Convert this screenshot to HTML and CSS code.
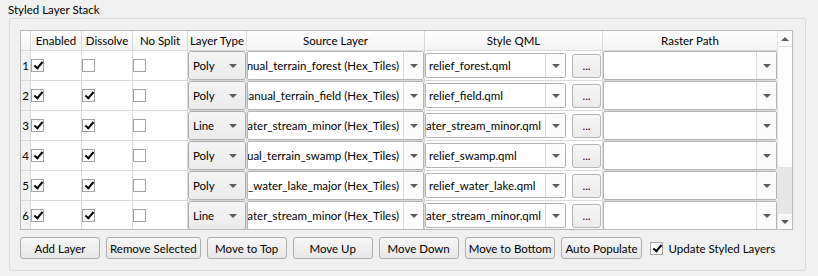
FILE: index.html
```html
<!DOCTYPE html>
<html lang="en">
<head>
    <meta charset="UTF-8">
    <title>Styled Layer Stack</title>
    <link rel="stylesheet" href="styles.css">
</head>
<body>
    <div class="title">Styled Layer Stack</div>
    <div class="group">
        <div class="table">
            <div class="viewport">
                <div class="grid">
                    <div class="hcell corner"></div>
                    <div class="hcell">Enabled</div>
                    <div class="hcell">Dissolve</div>
                    <div class="hcell">No Split</div>
                    <div class="hcell">Layer Type</div>
                    <div class="hcell">Source Layer</div>
                    <div class="hcell">Style QML</div>
                    <div class="hcell">Raster Path</div>

                    <!-- row 1 -->
                    <div class="rownum">1</div>
                    <div class="cell"><span class="check on"></span></div>
                    <div class="cell"><span class="check"></span></div>
                    <div class="cell"><span class="check"></span></div>
                    <div class="cell"><div class="combo"><span>Poly</span><i class="arrow"></i></div></div>
                    <div class="cell"><div class="edit-combo"><div class="text"><span>manual_terrain_forest (Hex_Tiles)</span></div><div class="drop"><i class="arrow"></i></div></div></div>
                    <div class="cell style-cell"><div class="edit-combo small"><div class="text"><span>relief_forest.qml</span></div><div class="drop"><i class="arrow"></i></div></div><button class="browse">...</button></div>
                    <div class="cell"><div class="edit-combo"><div class="text"><span></span></div><div class="drop"><i class="arrow"></i></div></div></div>

                    <!-- row 2 -->
                    <div class="rownum">2</div>
                    <div class="cell"><span class="check on"></span></div>
                    <div class="cell"><span class="check on"></span></div>
                    <div class="cell"><span class="check"></span></div>
                    <div class="cell"><div class="combo"><span>Poly</span><i class="arrow"></i></div></div>
                    <div class="cell"><div class="edit-combo"><div class="text"><span>manual_terrain_field (Hex_Tiles)</span></div><div class="drop"><i class="arrow"></i></div></div></div>
                    <div class="cell style-cell"><div class="edit-combo small"><div class="text"><span>relief_field.qml</span></div><div class="drop"><i class="arrow"></i></div></div><button class="browse">...</button></div>
                    <div class="cell"><div class="edit-combo"><div class="text"><span></span></div><div class="drop"><i class="arrow"></i></div></div></div>

                    <!-- row 3 -->
                    <div class="rownum">3</div>
                    <div class="cell"><span class="check on"></span></div>
                    <div class="cell"><span class="check on"></span></div>
                    <div class="cell"><span class="check"></span></div>
                    <div class="cell"><div class="combo"><span>Line</span><i class="arrow"></i></div></div>
                    <div class="cell"><div class="edit-combo"><div class="text"><span>natural_water_stream_minor (Hex_Tiles)</span></div><div class="drop"><i class="arrow"></i></div></div></div>
                    <div class="cell style-cell"><div class="edit-combo small"><div class="text"><span>relief_water_stream_minor.qml</span></div><div class="drop"><i class="arrow"></i></div></div><button class="browse">...</button></div>
                    <div class="cell"><div class="edit-combo"><div class="text"><span></span></div><div class="drop"><i class="arrow"></i></div></div></div>

                    <!-- row 4 -->
                    <div class="rownum">4</div>
                    <div class="cell"><span class="check on"></span></div>
                    <div class="cell"><span class="check on"></span></div>
                    <div class="cell"><span class="check"></span></div>
                    <div class="cell"><div class="combo"><span>Poly</span><i class="arrow"></i></div></div>
                    <div class="cell"><div class="edit-combo"><div class="text"><span>manual_terrain_swamp (Hex_Tiles)</span></div><div class="drop"><i class="arrow"></i></div></div></div>
                    <div class="cell style-cell"><div class="edit-combo small"><div class="text"><span>relief_swamp.qml</span></div><div class="drop"><i class="arrow"></i></div></div><button class="browse">...</button></div>
                    <div class="cell"><div class="edit-combo"><div class="text"><span></span></div><div class="drop"><i class="arrow"></i></div></div></div>

                    <!-- row 5 -->
                    <div class="rownum">5</div>
                    <div class="cell"><span class="check on"></span></div>
                    <div class="cell"><span class="check on"></span></div>
                    <div class="cell"><span class="check"></span></div>
                    <div class="cell"><div class="combo"><span>Poly</span><i class="arrow"></i></div></div>
                    <div class="cell"><div class="edit-combo"><div class="text"><span>natural_water_lake_major (Hex_Tiles)</span></div><div class="drop"><i class="arrow"></i></div></div></div>
                    <div class="cell style-cell"><div class="edit-combo small"><div class="text"><span>relief_water_lake.qml</span></div><div class="drop"><i class="arrow"></i></div></div><button class="browse">...</button></div>
                    <div class="cell"><div class="edit-combo"><div class="text"><span></span></div><div class="drop"><i class="arrow"></i></div></div></div>

                    <!-- row 6 -->
                    <div class="rownum">6</div>
                    <div class="cell"><span class="check on"></span></div>
                    <div class="cell"><span class="check on"></span></div>
                    <div class="cell"><span class="check"></span></div>
                    <div class="cell"><div class="combo"><span>Line</span><i class="arrow"></i></div></div>
                    <div class="cell"><div class="edit-combo"><div class="text"><span>natural_water_stream_minor (Hex_Tiles)</span></div><div class="drop"><i class="arrow"></i></div></div></div>
                    <div class="cell style-cell"><div class="edit-combo small"><div class="text"><span>relief_water_stream_minor.qml</span></div><div class="drop"><i class="arrow"></i></div></div><button class="browse">...</button></div>
                    <div class="cell"><div class="edit-combo"><div class="text"><span></span></div><div class="drop"><i class="arrow"></i></div></div></div>
                </div>
            </div>
            <div class="vscroll">
                <div class="sb-btn"><i class="arrow up"></i></div>
                <div class="sb-thumb"></div>
                <div class="sb-track"></div>
                <div class="sb-btn"><i class="arrow"></i></div>
            </div>
        </div>

        <div class="actions">
            <button class="btn">Add Layer</button>
            <button class="btn">Remove Selected</button>
            <button class="btn">Move to Top</button>
            <button class="btn">Move Up</button>
            <button class="btn">Move Down</button>
            <button class="btn">Move to Bottom</button>
            <button class="btn">Auto Populate</button>
            <label class="option"><span class="check on"></span>Update Styled Layers</label>
        </div>
    </div>
</body>
</html>
```

FILE: styles.css
```css
body {
    margin: 0;
    background-color: #f0f0f0;
    font-family: Lato, "Noto Sans", Arial, sans-serif;
    font-size: 11.5px;
    color: #000;
}
.title {
    padding: 2px 0 0 8px;
    height: 16px;
    line-height: 16px;
}
.group {
    margin-left: 9px;
    width: 797px;
    box-sizing: border-box;
    border: 1px solid #dcdcdc;
    border-radius: 2px;
    padding: 11px 0 11px 10px;
}

/* table */
.table {
    display: flex;
    width: 773px;
    height: 200px;
    box-sizing: border-box;
    border: 1px solid #b9b9b9;
    background-color: #fff;
}
.viewport {
    width: 757px;
    height: 198px;
    overflow: hidden;
}
.grid {
    display: grid;
    grid-template-columns: 10px 51px 51px 55px 59px 178px 178px 175px;
    grid-template-rows: 20px;
    grid-auto-rows: 30px;
}
.hcell {
    box-sizing: border-box;
    border-right: 1px solid #d9d9d9;
    border-bottom: 1px solid #d9d9d9;
    background: linear-gradient(#ffffff, #f3f3f3);
    display: flex;
    align-items: center;
    justify-content: center;
    white-space: nowrap;
}
.rownum {
    box-sizing: border-box;
    border-right: 1px solid #d9d9d9;
    border-bottom: 1px solid #d9d9d9;
    background-color: #f2f2f2;
    display: flex;
    align-items: center;
    justify-content: center;
}
.cell {
    box-sizing: border-box;
    border-right: 1px solid #d9d9d9;
    border-bottom: 1px solid #d9d9d9;
    display: flex;
    align-items: center;
    min-width: 0;
}

/* checkboxes */
.check {
    width: 13px;
    height: 13px;
    box-sizing: border-box;
    border: 1px solid #a3a3a3;
    background-color: #fff;
    position: relative;
    flex-shrink: 0;
}
.check.on::after {
    content: "";
    position: absolute;
    left: 4px;
    top: 0px;
    width: 3px;
    height: 7px;
    border-right: 2px solid #000;
    border-bottom: 2px solid #000;
    transform: rotate(40deg);
}

.arrow {
    display: block;
    width: 0;
    height: 0;
    border-left: 4px solid transparent;
    border-right: 4px solid transparent;
    border-top: 4px solid #5c5c5c;
}
.arrow.up {
    border-top: none;
    border-bottom: 4px solid #5c5c5c;
}

/* layer type combo */
.combo {
    width: 100%;
    height: 100%;
    box-sizing: border-box;
    border: 1px solid #adadad;
    border-radius: 3px;
    background: linear-gradient(#f5f5f5, #ebebeb);
    display: flex;
    align-items: center;
    justify-content: space-between;
    padding: 0 8px 0 4px;
}

/* editable combo */
.edit-combo {
    width: 100%;
    height: 100%;
    box-sizing: border-box;
    border: 1px solid #b4b4b4;
    border-radius: 2px;
    background-color: #fff;
    display: flex;
}
.edit-combo .text {
    flex: 1;
    min-width: 0;
    overflow: hidden;
    display: flex;
    justify-content: flex-end;
    align-items: center;
    padding: 0 4px 0 3px;
}
.edit-combo .text span {
    min-width: 100%;
    flex-shrink: 0;
    white-space: nowrap;
}
.edit-combo .drop {
    width: 19px;
    border-left: 1px solid #dcdcdc;
    display: flex;
    align-items: center;
    justify-content: center;
    background-color: #fbfbfb;
}
.style-cell {
    gap: 6px;
}
.edit-combo.small {
    width: 141px;
    height: 25px;
    flex-shrink: 0;
}
.browse {
    width: 29px;
    height: 24px;
    border: 1px solid #b4b4b4;
    border-radius: 3px;
    background: linear-gradient(#f6f6f6, #ebebeb);
    font: inherit;
    color: #300030;
    padding: 0;
}

/* scrollbar */
.vscroll {
    width: 14px;
    display: flex;
    flex-direction: column;
    border-left: 1px solid #e4e4e4;
    background-color: #f4f4f4;
}
.sb-btn {
    height: 15px;
    display: flex;
    align-items: center;
    justify-content: center;
    background-color: #fafafa;
}
.sb-thumb {
    height: 120px;
    background-color: #fcfcfc;
    border-top: 1px solid #e2e2e2;
    border-bottom: 1px solid #e2e2e2;
}
.sb-track {
    flex: 1;
    background-color: #e6e6e6;
}

/* buttons row */
.actions {
    display: flex;
    align-items: center;
    gap: 6px;
    margin-top: 7px;
}
.btn {
    height: 22px;
    min-width: 80px;
    padding: 0 3px;
    border: 1px solid #adadad;
    border-radius: 3px;
    background: linear-gradient(#f6f6f6, #e7e7e7);
    font: inherit;
    color: #000;
    white-space: nowrap;
}
.option {
    display: flex;
    align-items: center;
    gap: 6px;
    margin-left: 2px;
    white-space: nowrap;
}
```
